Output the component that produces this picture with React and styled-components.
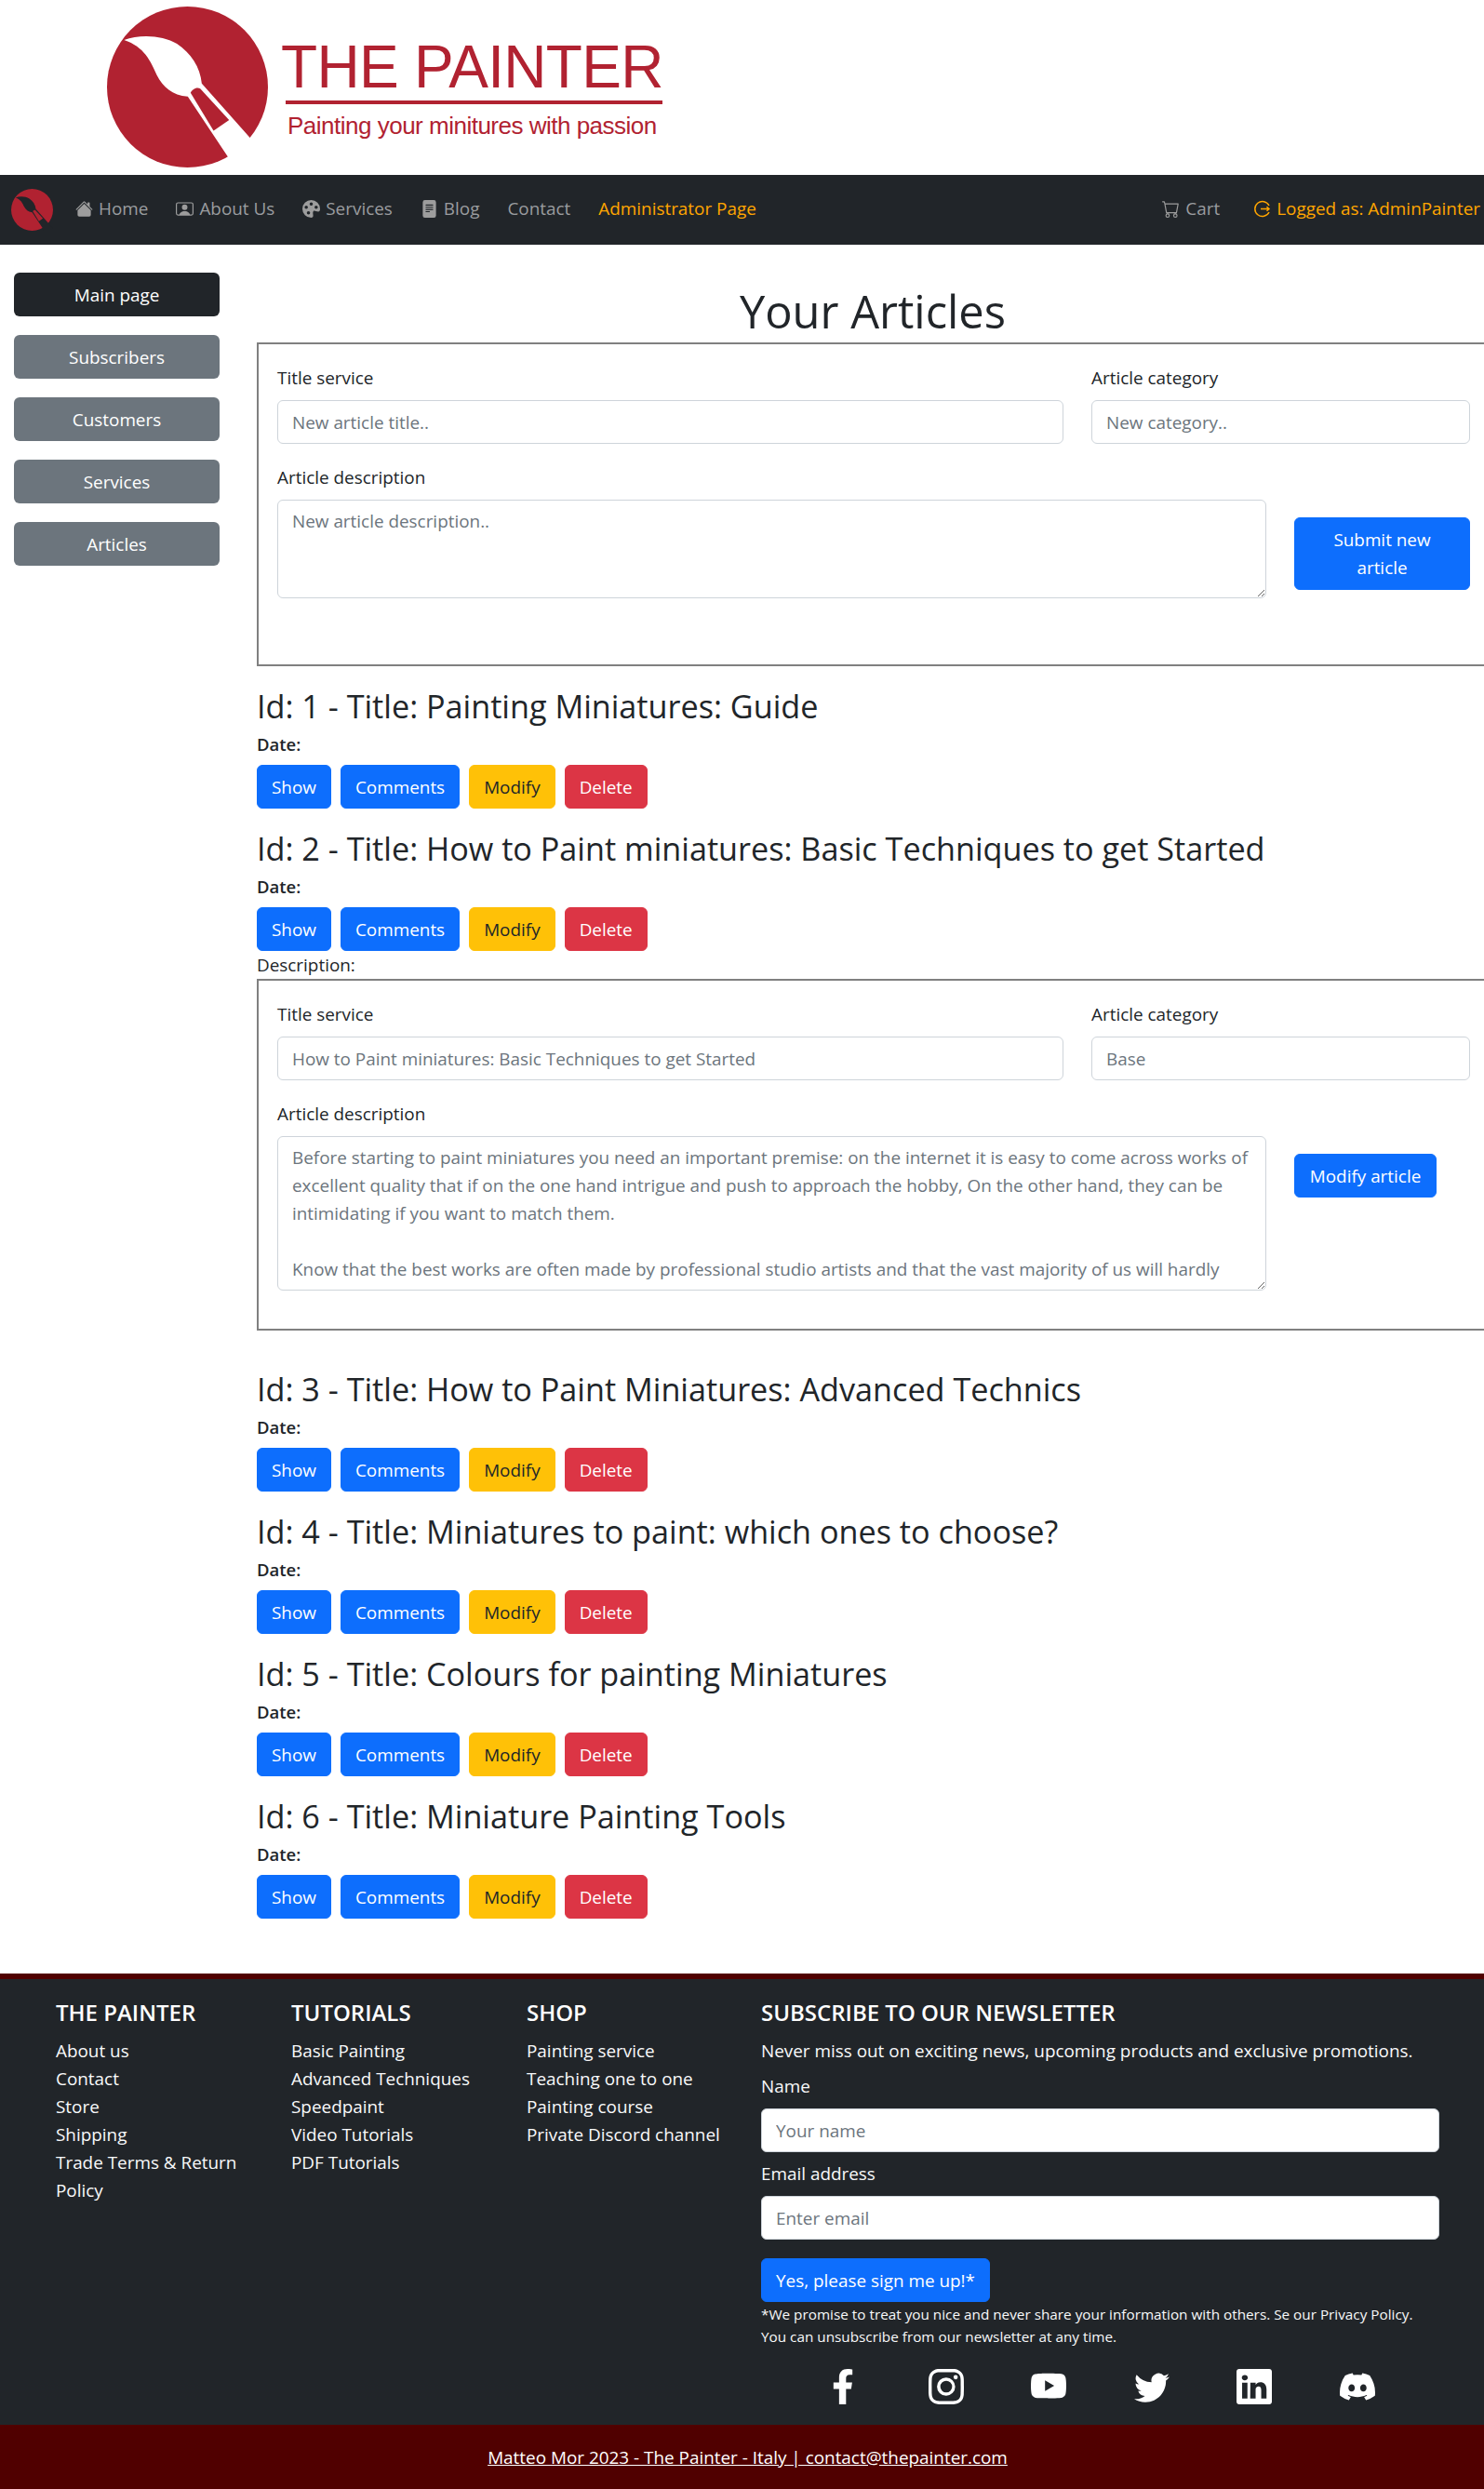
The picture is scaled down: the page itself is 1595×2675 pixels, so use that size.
import React from 'react';
import styled, { createGlobalStyle } from 'styled-components';
import {
  BsHouseFill, BsPersonVideo, BsPaletteFill, BsFileTextFill, BsCart,
  BsInstagram, BsYoutube, BsTwitter, BsLinkedin, BsDiscord,
} from 'react-icons/bs';
import { FaFacebookF } from 'react-icons/fa';

const GlobalStyle = createGlobalStyle`
  * { box-sizing: border-box; }
  html, body { margin: 0; padding: 0; }
  body {
    font-family: "Open Sans", "Noto Sans", sans-serif;
    font-size: 18.9px;
    line-height: 30px;
    color: #212529;
    background: #fff;
    overflow-x: hidden;
  }
`;

const Page = styled.div`
  width: 1595px;
  overflow: hidden;
`;

/* ---------- header ---------- */
const Header = styled.header`
  height: 188px;
  display: flex;
  align-items: center;
  padding: 0 0 2px 115px;
  gap: 14px;
`;

const Wordmark = styled.div`
  width: 410px;
  margin-top: 4px;
  font-family: "Liberation Sans", Arial, sans-serif;
  color: #b12231;
`;

const WordmarkTitle = styled.div`
  font-size: 64px;
  line-height: 64px;
  letter-spacing: -0.7px;
  white-space: nowrap;
`;

const WordmarkLine = styled.div`
  height: 4px;
  margin: 4px 0 7px 5px;
  background: #b12231;
`;

const WordmarkTag = styled.div`
  margin-left: 7px;
  font-size: 26px;
  line-height: 32px;
  letter-spacing: -0.5px;
  white-space: nowrap;
`;

const Mark = styled.svg`
  flex: none;
  display: block;
`;

/* ---------- navbar ---------- */
const Navbar = styled.nav`
  height: 75px;
  background: #212529;
  display: flex;
  align-items: center;
  padding-left: 12px;
`;

const NavList = styled.div`
  display: flex;
  align-items: center;
  margin-left: 24px;
  padding-bottom: 3px;
  gap: 30px;
`;

const NavRight = styled.div`
  display: flex;
  align-items: center;
  margin-left: auto;
  padding: 0 4px 3px 0;
  gap: 36px;
`;

const NavLink = styled.a`
  display: flex;
  align-items: center;
  gap: 6px;
  white-space: nowrap;
  color: ${(p) => (p.$accent ? 'orange' : '#9a9c9f')};
  svg { font-size: 19px; color: ${(p) => (p.$accent ? 'orange' : '#9d9d9d')}; }
`;

/* ---------- body ---------- */
const Body = styled.div`
  display: flex;
`;

const Sidebar = styled.aside`
  width: 276px;
  flex: none;
  padding: 30px 40px 0 15px;
  display: flex;
  flex-direction: column;
  gap: 20px;
`;

const SideButton = styled.a`
  height: 47px;
  border-radius: 6px;
  display: flex;
  align-items: center;
  justify-content: center;
  color: #fff;
  background: ${(p) => (p.$active ? '#212529' : '#6c757d')};
`;

const Main = styled.main`
  flex: 1;
  min-width: 0;
  padding-top: 41px;
  padding-bottom: 37px;
`;

const PageTitle = styled.h1`
  margin: 0 -5px 4px 0;
  font-size: 48.8px;
  line-height: 60px;
  font-weight: 400;
  text-align: center;
`;

const Frame = styled.form`
  margin: ${(p) => p.$margin};
  margin-right: -20px;
  border: 2px solid #808080;
  padding: 21px 20px ${(p) => p.$bottom}px;
`;

const FieldRow = styled.div`
  display: flex;
  gap: 30px;
  margin-bottom: 21px;
`;

const Field = styled.div`
  width: ${(p) => p.$width}px;
  flex: none;
`;

const DescriptionRow = styled.div`
  display: flex;
  gap: 30px;
`;

const Label = styled.label`
  display: block;
  margin-bottom: 9px;
  height: 30px;
`;

const Input = styled.input`
  display: block;
  width: 100%;
  height: 47px;
  padding: 0 15px;
  border: 1px solid #ced4da;
  border-radius: 6px;
  font: inherit;
  color: #6c757d;
  background: #fff;
  &::placeholder { color: #6c757d; opacity: 1; }
`;

const TextArea = styled.textarea`
  display: block;
  width: 100%;
  height: ${(p) => p.$height}px;
  padding: 7px 15px;
  border: 1px solid #ced4da;
  border-radius: 6px;
  font: inherit;
  color: #6c757d;
  white-space: pre;
  overflow: hidden;
  resize: vertical;
  &::placeholder { color: #6c757d; opacity: 1; }
`;

const Button = styled.button`
  border: 1px solid ${(p) => p.$bg || '#0d6efd'};
  border-radius: 6px;
  height: ${(p) => p.$height || 47}px;
  padding: 0 15px;
  font: inherit;
  color: ${(p) => p.$color || '#fff'};
  background: ${(p) => p.$bg || '#0d6efd'};
`;

const SideAction = styled.div`
  margin-top: 58px;
  width: ${(p) => p.$width}px;
  flex: none;
  ${Button} { width: 100%; }
`;

const Article = styled.article`
  margin-bottom: 22px;
`;

const ArticleTitle = styled.h3`
  margin: 0;
  font-size: 34.2px;
  line-height: 42px;
  font-weight: 400;
  white-space: nowrap;
`;

const DateLine = styled.div`
  margin: 8px 0 10px;
  font-size: 18.5px;
  line-height: 24px;
  font-weight: 600;
`;

const Actions = styled.div`
  display: flex;
  gap: 10px;
`;

const DescriptionLabel = styled.div`
  height: 30px;
  margin-top: -22px;
`;

/* ---------- footer ---------- */
const Footer = styled.footer`
  background: #212529;
  border-top: 6px solid #500000;
  color: #f8f9fa;
`;

const FooterTop = styled.div`
  height: 479px;
  padding: 21px 48px 0 60px;
  display: grid;
  grid-template-columns: 253px 253px 252px 729px;
`;

const FooterHeading = styled.h5`
  margin: 0 0 11px;
  font-size: 24px;
  line-height: 30px;
  font-weight: 600;
  color: #fff;
`;

const FooterLinks = styled.div`
  display: flex;
  flex-direction: column;
  padding-right: 30px;
`;

const FooterLink = styled.a`
  color: #f8f9fa;
`;

const Newsletter = styled.div`
  display: flex;
  flex-direction: column;
`;

const FooterLabel = styled.div`
  margin-top: 8px;
  margin-bottom: 9px;
`;

const SignUp = styled.div`
  margin-top: 20px;
`;

const PromiseNote = styled.p`
  margin: 1px 0 0;
  font-size: 15.3px;
  line-height: 24px;
  white-space: nowrap;
`;

const Socials = styled.div`
  display: flex;
  justify-content: space-between;
  align-items: center;
  width: 591px;
  height: 48px;
  margin: 18px 0 0 69px;
  font-size: 38px;
  color: #fff;
  svg { display: block; }
`;

const Copyright = styled.div`
  height: 69px;
  background: #500000;
  display: flex;
  align-items: center;
  justify-content: center;
  padding-left: 12px;
  a { color: #fff; text-decoration: underline; }
`;

/* logo mark: disc with a brush cut out of it, cut colour depends on the background */
function LogoMark({ size, cut }) {
  return (
    <Mark width={size} height={size} viewBox="45 20 518 518">
      <circle cx="304" cy="279" r="259" fill="#b12231" />
      <path
        d="M100 128 C150 108 225 112 270 140 C315 170 345 215 350 268 L505 442 L600 560 L450 590 L435 505 L305 310 C255 305 225 280 205 240 C185 195 165 150 100 128 Z"
        fill={cut}
      />
      <path
        d="M314 298 C318 288 332 278 345 284 L438 385 L388 420 Z"
        fill="#b12231"
      />
    </Mark>
  );
}

function LogoutIcon() {
  return (
    <svg width="19" height="19" viewBox="0 0 19 19" fill="none" stroke="orange" strokeWidth="1.5">
      <path d="M17 6 A8 8 0 1 0 17 13" />
      <path d="M8 9.5 H17 M14.5 7.2 L17 9.5 L14.5 11.8" />
    </svg>
  );
}

const sideItems = ['Main page', 'Subscribers', 'Customers', 'Services', 'Articles'];

const articles = [
  { id: 1, title: 'Painting Miniatures: Guide' },
  { id: 2, title: 'How to Paint miniatures: Basic Techniques to get Started', open: true },
  { id: 3, title: 'How to Paint Miniatures: Advanced Technics' },
  { id: 4, title: 'Miniatures to paint: which ones to choose?' },
  { id: 5, title: 'Colours for painting Miniatures' },
  { id: 6, title: 'Miniature Painting Tools' },
];

const longText = `Before starting to paint miniatures you need an important premise: on the internet it is easy to come across works of
excellent quality that if on the one hand intrigue and push to approach the hobby, On the other hand, they can be
intimidating if you want to match them.

Know that the best works are often made by professional studio artists and that the vast majority of us will hardly`;

const footerCols = [
  { title: 'THE PAINTER', links: ['About us', 'Contact', 'Store', 'Shipping', 'Trade Terms & Return Policy'] },
  { title: 'TUTORIALS', links: ['Basic Painting', 'Advanced Techniques', 'Speedpaint', 'Video Tutorials', 'PDF Tutorials'] },
  { title: 'SHOP', links: ['Painting service', 'Teaching one to one', 'Painting course', 'Private Discord channel'] },
];

export default function App() {
  return (
    <Page>
      <GlobalStyle />
      <Header>
        <LogoMark size={173} cut="#fff" />
        <Wordmark>
          <WordmarkTitle>THE PAINTER</WordmarkTitle>
          <WordmarkLine />
          <WordmarkTag>Painting your minitures with passion</WordmarkTag>
        </Wordmark>
      </Header>

      <Navbar>
        <LogoMark size={45} cut="#212529" />
        <NavList>
          <NavLink><BsHouseFill />Home</NavLink>
          <NavLink><BsPersonVideo />About Us</NavLink>
          <NavLink><BsPaletteFill />Services</NavLink>
          <NavLink><BsFileTextFill />Blog</NavLink>
          <NavLink>Contact</NavLink>
          <NavLink $accent>Administrator Page</NavLink>
        </NavList>
        <NavRight>
          <NavLink><BsCart />Cart</NavLink>
          <NavLink $accent><LogoutIcon />Logged as: AdminPainter</NavLink>
        </NavRight>
      </Navbar>

      <Body>
        <Sidebar>
          {sideItems.map((item, i) => (
            <SideButton key={item} $active={i === 0}>{item}</SideButton>
          ))}
        </Sidebar>

        <Main>
          <PageTitle>Your Articles</PageTitle>

          <Frame $margin="0 0 22px" $bottom={71}>
            <FieldRow>
              <Field $width={845}>
                <Label>Title service</Label>
                <Input placeholder="New article title.." />
              </Field>
              <Field $width={407}>
                <Label>Article category</Label>
                <Input placeholder="New category.." />
              </Field>
            </FieldRow>
            <DescriptionRow>
              <Field $width={1063}>
                <Label>Article description</Label>
                <TextArea $height={106} placeholder="New article description.." />
              </Field>
              <SideAction $width={189}>
                <Button $height={78} type="button">Submit new article</Button>
              </SideAction>
            </DescriptionRow>
          </Frame>

          {articles.map((a) => (
            <React.Fragment key={a.id}>
              <Article>
                <ArticleTitle>Id: {a.id} - Title: {a.title}</ArticleTitle>
                <DateLine>Date:</DateLine>
                <Actions>
                  <Button type="button">Show</Button>
                  <Button type="button">Comments</Button>
                  <Button type="button" $bg="#ffc107" $color="#212529">Modify</Button>
                  <Button type="button" $bg="#dc3545">Delete</Button>
                </Actions>
              </Article>
              {a.open && (
                <>
                  <DescriptionLabel>Description:</DescriptionLabel>
                  <Frame $margin="0 0 42px" $bottom={41}>
                    <FieldRow>
                      <Field $width={845}>
                        <Label>Title service</Label>
                        <Input defaultValue="How to Paint miniatures: Basic Techniques to get Started" />
                      </Field>
                      <Field $width={407}>
                        <Label>Article category</Label>
                        <Input defaultValue="Base" />
                      </Field>
                    </FieldRow>
                    <DescriptionRow>
                      <Field $width={1063}>
                        <Label>Article description</Label>
                        <TextArea $height={166} defaultValue={longText} />
                      </Field>
                      <SideAction $width={153}>
                        <Button type="button">Modify article</Button>
                      </SideAction>
                    </DescriptionRow>
                  </Frame>
                </>
              )}
            </React.Fragment>
          ))}
        </Main>
      </Body>

      <Footer>
        <FooterTop>
          {footerCols.map((col) => (
            <div key={col.title}>
              <FooterHeading>{col.title}</FooterHeading>
              <FooterLinks>
                {col.links.map((l) => <FooterLink key={l}>{l}</FooterLink>)}
              </FooterLinks>
            </div>
          ))}
          <Newsletter>
            <FooterHeading>SUBSCRIBE TO OUR NEWSLETTER</FooterHeading>
            <div>Never miss out on exciting news, upcoming products and exclusive promotions.</div>
            <FooterLabel>Name</FooterLabel>
            <Input placeholder="Your name" />
            <FooterLabel>Email address</FooterLabel>
            <Input placeholder="Enter email" />
            <SignUp><Button type="button">Yes, please sign me up!*</Button></SignUp>
            <PromiseNote>
              *We promise to treat you nice and never share your information with others. Se our Privacy Policy.
              <br />
              You can unsubscribe from our newsletter at any time.
            </PromiseNote>
            <Socials>
              <FaFacebookF />
              <BsInstagram />
              <BsYoutube />
              <BsTwitter />
              <BsLinkedin />
              <BsDiscord />
            </Socials>
          </Newsletter>
        </FooterTop>
        <Copyright>
          <a>Matteo Mor 2023 - The Painter - Italy | contact@thepainter.com</a>
        </Copyright>
      </Footer>
    </Page>
  );
}
